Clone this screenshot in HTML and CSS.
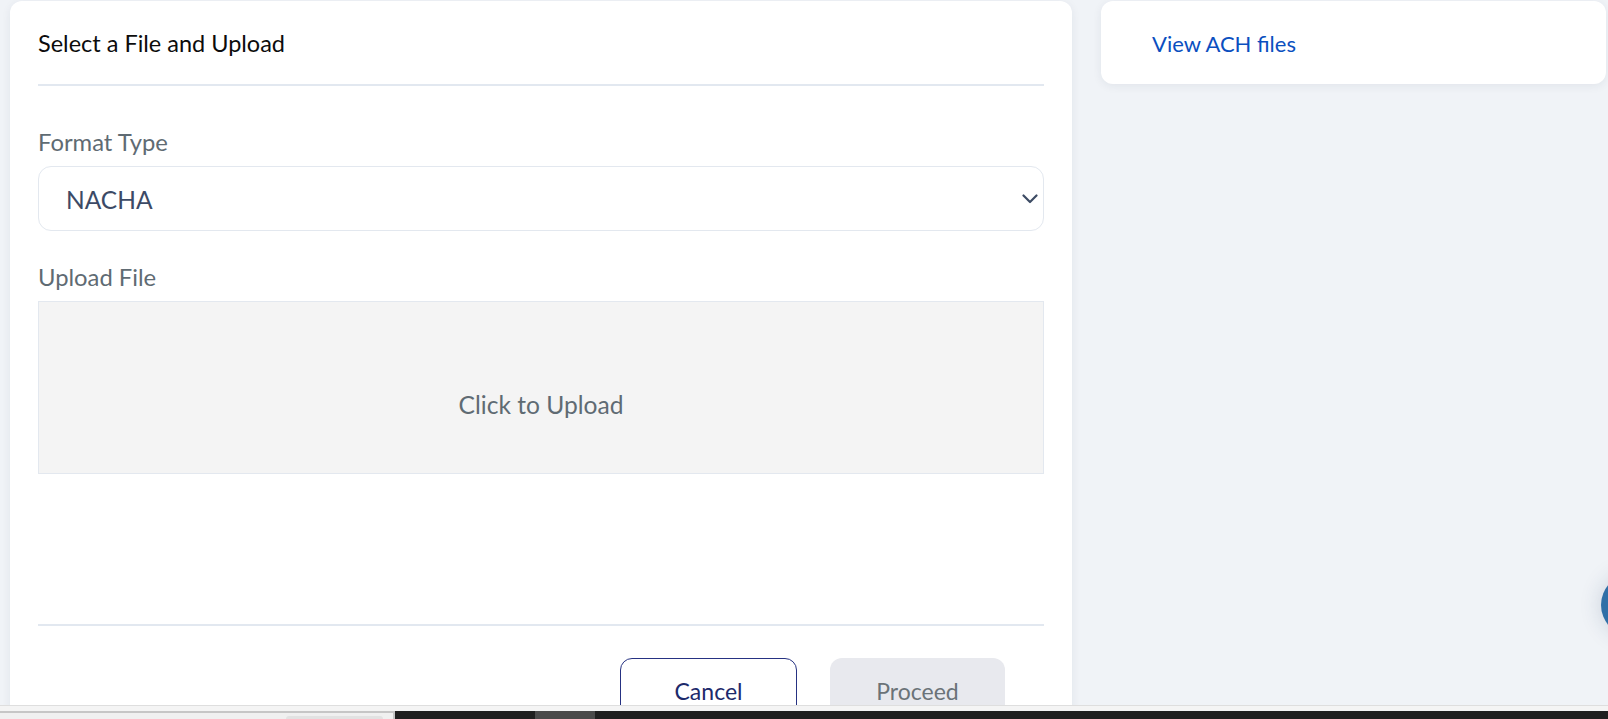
FILE: index.html
```html
<!DOCTYPE html>
<html lang="en">
<head>
<meta charset="utf-8">
<title>Select a File and Upload</title>
<link rel="stylesheet" href="styles.css">
</head>
<body>
<div class="viewport">
  <main class="page">
    <section class="card upload-card">
      <h1 class="card-title">Select a File and Upload</h1>
      <hr class="divider">
      <div class="field">
        <label class="field-label">Format Type</label>
        <div class="select">
          <span class="select-value">NACHA</span>
          <svg class="chevron" width="16" height="10" viewBox="0 0 16 10" aria-hidden="true">
            <path d="M1.5 1.5 L8 8 L14.5 1.5" fill="none" stroke="#3d4b64" stroke-width="2.2" stroke-linecap="round" stroke-linejoin="round"/>
          </svg>
        </div>
      </div>
      <div class="field field-upload">
        <label class="field-label">Upload File</label>
        <div class="dropzone">Click to Upload</div>
      </div>
      <hr class="divider divider-bottom">
      <div class="actions">
        <button class="btn btn-outline">Cancel</button>
        <button class="btn btn-disabled">Proceed</button>
      </div>
    </section>
    <aside class="card side-card">
      <a class="side-link" href="#">View ACH files</a>
    </aside>
    <div class="fab"></div>
  </main>
  <div class="os-strip">
    <div class="os-left"><div class="os-tab"></div></div>
    <div class="os-right"><div class="os-block"></div></div>
  </div>
</div>
</body>
</html>
```

FILE: styles.css
```css
* { box-sizing: border-box; }

html, body {
  margin: 0;
  padding: 0;
  width: 1608px;
  height: 719px;
  overflow: hidden;
  font-family: "Lato", "Liberation Sans", sans-serif;
  background: #f0f3f7;
}

.viewport {
  width: 1608px;
  height: 719px;
  display: flex;
  flex-direction: column;
}

.page {
  position: relative;
  height: 705px;
  flex: none;
  overflow: hidden;
  display: flex;
  align-items: flex-start;
  gap: 29px;
  padding: 1px 2px 0 10px;
  background: #f0f3f7;
}

.card {
  background: #ffffff;
  border-radius: 12px;
  box-shadow: 0 2px 10px rgba(30, 45, 70, 0.07);
}

.upload-card {
  width: 1062px;
  flex: none;
  min-height: 760px;
  padding: 27px 28px 0 28px;
}

.card-title {
  margin: 0;
  font-size: 23.5px;
  line-height: 30px;
  font-weight: 400;
  color: #0c0c0c;
}

.divider {
  margin: 26px 0 0 0;
  border: 0;
  height: 2px;
  background: #e2e8f0;
}

.field {
  margin-top: 41px;
  display: flex;
  flex-direction: column;
  gap: 9px;
}

.field-upload {
  margin-top: 31px;
}

.field-label {
  font-size: 23.8px;
  line-height: 30px;
  color: #5f6b73;
}

.select {
  height: 65px;
  border: 1px solid #e3e8ef;
  border-radius: 13px;
  display: flex;
  align-items: center;
  justify-content: space-between;
  padding: 0 5px 0 27px;
}

.select-value {
  font-size: 24.5px;
  color: #3c4a66;
  padding-top: 2px;
}

.chevron {
  display: block;
}

.dropzone {
  height: 173px;
  background: #f4f4f4;
  border: 1px solid #e3e8ef;
  display: flex;
  align-items: center;
  justify-content: center;
  font-size: 24.6px;
  color: #5f6b73;
  padding-top: 34px;
}

.divider-bottom {
  margin-top: 150px;
}

.actions {
  display: flex;
  justify-content: flex-end;
  gap: 33px;
  padding-right: 39px;
  margin-top: 32px;
}

.btn {
  font-family: "Lato", "Liberation Sans", sans-serif;
  font-size: 23px;
  height: 64px;
  border-radius: 12px;
  padding: 0;
  padding-top: 2px;
}

.btn-outline {
  width: 177px;
  background: #ffffff;
  border: 1px solid #263282;
  color: #1d2a6b;
}

.btn-disabled {
  width: 175px;
  background: #e8e9ee;
  border: 0;
  color: #6b7378;
}

.side-card {
  width: 505px;
  flex: none;
  height: 83px;
  padding: 28px 0 0 51px;
}

.side-link {
  font-size: 22px;
  line-height: 30px;
  color: #0b4fbf;
  text-decoration: none;
}

.fab {
  position: absolute;
  left: 1601px;
  top: 574px;
  width: 62px;
  height: 62px;
  border-radius: 50%;
  background: #2f6fa7;
  box-shadow: 0 0 22px rgba(30, 60, 100, 0.18);
}

.os-strip {
  flex: 1;
  display: flex;
  border-top: 1px solid #dedede;
  background: #f4f4f4;
  padding-top: 5px;
}

.os-left {
  width: 395px;
  flex: none;
  background: #f0f0f0;
  border-top: 2px solid #c6c6c6;
  border-right: 2px solid #c6c6c6;
  position: relative;
}

.os-tab {
  position: absolute;
  left: 286px;
  right: 10px;
  bottom: 0;
  height: 3px;
  background: #e2e2e2;
  border-radius: 3px 3px 0 0;
}

.os-right {
  flex: 1;
  background: #1f1f1f;
  position: relative;
}

.os-block {
  position: absolute;
  left: 140px;
  width: 60px;
  top: 0;
  bottom: 0;
  background: #4a4a4a;
}
```
